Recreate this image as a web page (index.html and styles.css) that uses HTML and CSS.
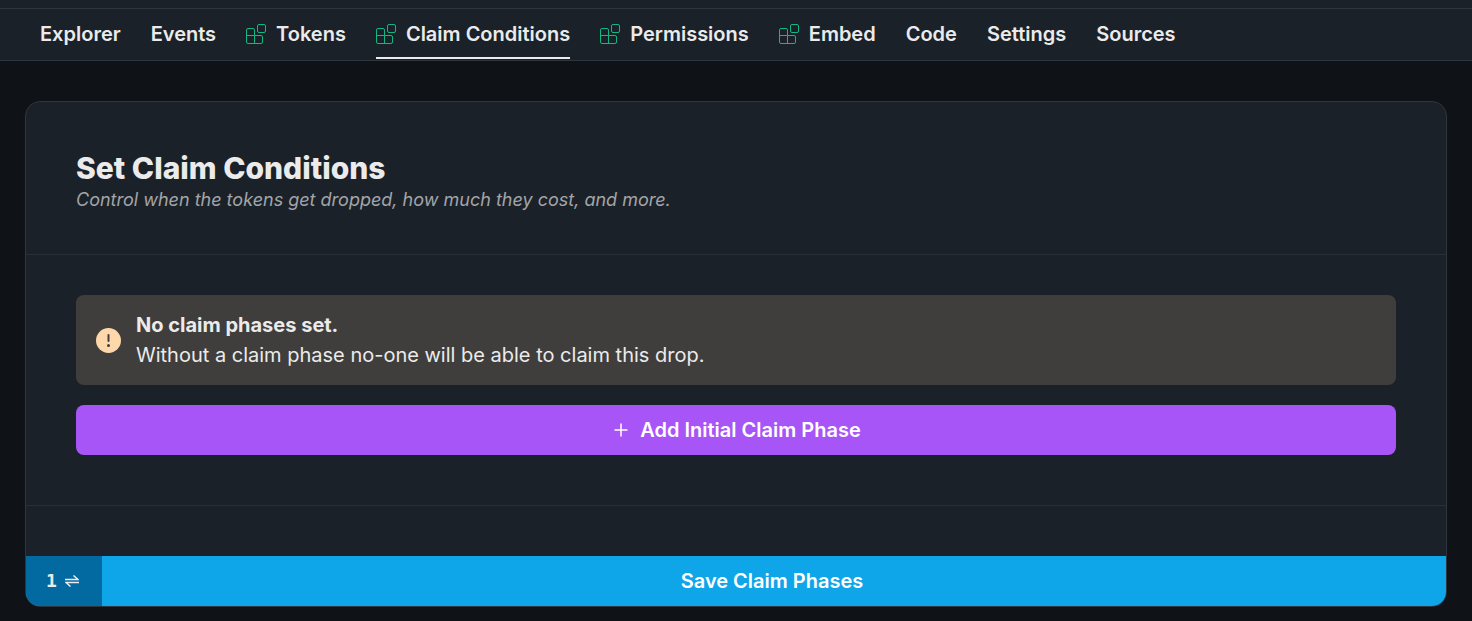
FILE: index.html
```html
<!DOCTYPE html>
<html lang="en">
<head>
    <meta charset="UTF-8">
    <meta name="viewport" content="width=device-width, initial-scale=1.0">
    <title>Claim Conditions</title>
    <link rel="stylesheet" href="styles.css">
</head>
<body>
    <svg class="sprite" aria-hidden="true">
        <symbol id="extension" viewBox="0 0 20 20">
            <path d="M.5 12V6Q.5 4.500 2 4.500H7Q8.500 4.500 8.500 6V11.500H15Q16.500 11.500 16.500 13V18Q16.500 19.500 15 19.500H2Q.5 19.500 .5 18ZM.5 11.500H8.500V19.500" />
            <rect x="11.500" y=".5" width="8" height="8" rx="1.500" />
        </symbol>
    </svg>

    <nav class="tabs">
        <a href="#">Explorer</a>
        <a href="#">Events</a>
        <a href="#"><svg class="tab-icon"><use href="#extension" /></svg>Tokens</a>
        <a href="#" class="active"><svg class="tab-icon"><use href="#extension" /></svg>Claim Conditions</a>
        <a href="#"><svg class="tab-icon"><use href="#extension" /></svg>Permissions</a>
        <a href="#"><svg class="tab-icon"><use href="#extension" /></svg>Embed</a>
        <a href="#">Code</a>
        <a href="#">Settings</a>
        <a href="#">Sources</a>
    </nav>

    <main class="card">
        <header class="card-header">
            <h1>Set Claim Conditions</h1>
            <p>Control when the tokens get dropped, how much they cost, and more.</p>
        </header>

        <section class="card-body">
            <div class="alert" role="alert">
                <svg class="alert-icon" viewBox="0 0 25 25">
                    <circle cx="12.500" cy="12.500" r="12.500" />
                    <path d="M12.500 7V13" />
                    <path d="M12.500 17.500V17.600" class="dot" />
                </svg>
                <div>
                    <strong>No claim phases set.</strong>
                    <p>Without a claim phase no-one will be able to claim this drop.</p>
                </div>
            </div>
            <button type="button" class="add-button">
                <svg class="plus-icon" viewBox="0 0 14 14"><path d="M7 .5V13.500M.5 7H13.500" /></svg>
                Add Initial Claim Phase
            </button>
        </section>

        <footer class="card-footer">
            <button type="submit" class="save-button">
                <span class="tx-count">
                    1
                    <svg class="swap-icon" viewBox="0 0 14 12"><path d="M0 4.500H13L8.500 .5M14 7.500H1L5.500 11.500" /></svg>
                </span>
                <span class="save-label">Save Claim Phases</span>
            </button>
        </footer>
    </main>
</body>
</html>
```

FILE: styles.css
```css
* {
    box-sizing: border-box;
}
body {
    margin: 0;
    padding-top: 8px;
    background: linear-gradient(#1b2129 8px, #0f1216 8px);
    color: #ebebeb;
    font-family: Inter, "Liberation Sans", sans-serif;
    font-size: 20px;
    line-height: 30px;
}
h1, p {
    margin: 0;
}
button {
    border: none;
    padding: 0;
    color: #fff;
    font: inherit;
    font-weight: 600;
    cursor: pointer;
}
.sprite {
    display: none;
}
.tabs {
    display: flex;
    gap: 30px;
    padding: 0 40px 1px;
    background: #1b2129;
    border-top: 1px solid #2f353d;
    border-bottom: 1px solid #2f353d;
}
.tabs a {
    display: flex;
    align-items: center;
    gap: 10px;
    height: 50px;
    padding-top: 1px;
    border-bottom: 2px solid transparent;
    color: inherit;
    font-weight: 600;
    text-decoration: none;
    white-space: nowrap;
}
.tabs .active {
    border-bottom-color: #ebebeb;
}
.tab-icon {
    width: 20px;
    height: 20px;
    fill: none;
    stroke: #10b981;
}
.card {
    margin: 40px 25px 15px;
    background: #1b2129;
    border: 1px solid #2f353d;
    border-radius: 15px;
    overflow: hidden;
}
.card-header {
    padding: 49px 50px 40px;
    border-bottom: 1px solid #2a2f36;
}
.card-header h1 {
    font-size: 30px;
    font-weight: 800;
    line-height: 34px;
}
.card-header p {
    color: #a3a5a8;
    font-size: 18px;
    font-style: italic;
    line-height: 29px;
}
.card-body {
    display: flex;
    flex-direction: column;
    gap: 20px;
    padding: 40px 50px 50px;
}
.alert {
    display: flex;
    align-items: center;
    gap: 15px;
    padding: 15px 20px;
    border-radius: 8px;
    background: #403e3c;
}
.alert-icon {
    flex: none;
    width: 25px;
    height: 25px;
    fill: #fed7aa;
    stroke: #403e3c;
    stroke-width: 2;
    stroke-linecap: round;
}
.alert-icon circle {
    stroke: none;
}
.alert-icon .dot {
    stroke-width: 3;
}
.alert strong {
    font-weight: 700;
}
.add-button {
    display: flex;
    align-items: center;
    justify-content: center;
    gap: 12px;
    height: 50px;
    padding-left: 3px;
    border-radius: 8px;
    background: #a855f7;
}
.plus-icon {
    width: 14px;
    height: 14px;
    fill: none;
    stroke: #fff;
    stroke-width: 1.5;
}
.card-footer {
    padding-top: 50px;
    border-top: 1px solid #2a2f36;
}
.save-button {
    display: flex;
    width: 100%;
    height: 50px;
    background: #0ea5e9;
}
.tx-count {
    display: flex;
    align-items: center;
    gap: 8px;
    width: 76px;
    height: 50px;
    padding-left: 20px;
    background: #0369a1;
    color: #ebebeb;
    font-family: "DejaVu Sans Mono", monospace;
    font-size: 18px;
}
.swap-icon {
    width: 14px;
    height: 12px;
    fill: none;
    stroke: #ebebeb;
    stroke-width: 1.5;
}
.save-label {
    flex: 1;
    align-self: center;
    padding-right: 4px;
}
```
